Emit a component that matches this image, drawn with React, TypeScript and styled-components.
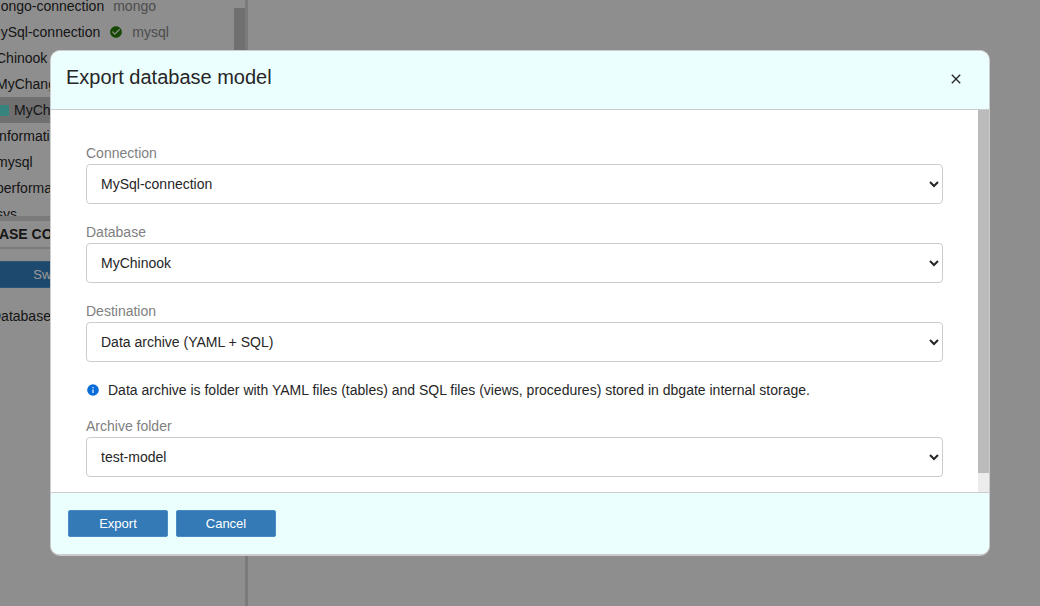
import React, { useId, useState } from "react";
import styled, { createGlobalStyle } from "styled-components";

const GlobalStyle = createGlobalStyle`
  * { box-sizing: border-box; }
  body {
    margin: 0;
    background: #ededed;
    color: #262626;
    font: 14px/16px "Liberation Sans", Arial, sans-serif;
  }
`;

const Shell = styled.div`
  display: flex;
  height: 100vh;
  overflow: hidden;
`;

const Sidebar = styled.aside`
  display: flex;
  flex-direction: column;
  width: 248px;
  flex: none;
  overflow: hidden;
  border-right: 3px solid #ccc;
`;

const TreePane = styled.div`
  display: flex;
  align-items: flex-end;
  height: 216px;
  overflow: hidden;
`;

const Tree = styled.ul`
  flex: 1;
  min-width: 0;
  height: 223px;
  margin: 0;
  padding: 0;
  list-style: none;
`;

const TreeRow = styled.li<{ $indent: number; $active?: boolean }>`
  display: flex;
  align-items: center;
  gap: 9px;
  height: 26px;
  white-space: nowrap;
  background: ${(p) => (p.$active ? "#bbb" : "transparent")};

  & > :first-child {
    margin-left: ${(p) => p.$indent}px;
  }
`;

const Engine = styled.span`
  color: #808080;
`;

const Square = styled.span`
  width: 11px;
  height: 11px;
  margin-right: -4px;
  background: #5cdbd3;
`;

const TreeThumb = styled.div`
  width: 11px;
  height: 208px;
  background: #bbb;
`;

const SplitBar = styled.div`
  height: 5px;
  flex: none;
  background: #ccc;
`;

const SectionTitle = styled.h2`
  margin: 0;
  padding: 5px 0 5px;
  border-bottom: 2px solid #ccc;
  text-indent: -48px;
  white-space: nowrap;
  font-size: 14px;
  line-height: 16px;
`;

const Button = styled.button<{ $wide?: boolean }>`
  width: ${(p) => (p.$wide ? "auto" : "100px")};
  height: 27px;
  padding: 0;
  border: 1px solid #4a8cc2;
  border-radius: 2px;
  background: #337ab7;
  color: #fff;
  font: 13px "Liberation Sans", Arial, sans-serif;
  margin: ${(p) => (p.$wide ? "12px 126px 20px -14px" : "0")};
`;

const SideNote = styled.p`
  margin: 0;
  text-indent: -9px;
`;

const Overlay = styled.div`
  position: fixed;
  inset: 0;
  padding: 50px;
  background: rgba(0, 0, 0, 0.4);
`;

const Dialog = styled.section`
  display: flex;
  flex-direction: column;
  max-height: 100%;
  overflow: hidden;
  border: 1px solid #ccc;
  border-bottom-width: 2px;
  border-radius: 10px;
  background: #fff;
`;

const Header = styled.header`
  display: flex;
  justify-content: space-between;
  flex: none;
  padding: 15px 25px 21px 15px;
  border-bottom: 1px solid #ccc;
  background: #ebffff;
`;

const Title = styled.h1`
  margin: 0;
  font-size: 20px;
  font-weight: 400;
  line-height: 22px;
`;

const CloseButton = styled.button`
  display: flex;
  height: 16px;
  margin-top: 5px;
  padding: 0;
  border: 0;
  background: none;
  color: inherit;
`;

const Body = styled.div`
  display: flex;
  height: 382px;
  min-height: 0;
`;

const Form = styled.form`
  flex: 1;
  min-width: 0;
  overflow: hidden;
  padding: 35px;
`;

const Scrollbar = styled.div`
  width: 11px;
  flex: none;
  background: #ececec;
`;

const ScrollThumb = styled.div`
  height: 95%;
  background: #bbb;
`;

const FieldBox = styled.div`
  display: flex;
  flex-direction: column;
  gap: 3px;
  margin-bottom: 20px;
`;

const Label = styled.label`
  color: #808080;
`;

const Select = styled.select`
  width: 100%;
  height: 40px;
  padding: 0 0 0 10px;
  border: 1px solid #ccc;
  border-radius: 4px;
  background-color: #fff;
  color: #262626;
  font: inherit;
`;

const Info = styled.p`
  display: flex;
  align-items: center;
  gap: 8px;
  margin: 0 0 20px;
`;

const Footer = styled.footer`
  display: flex;
  gap: 8px;
  flex: none;
  padding: 17px;
  border-top: 1px solid #ccc;
  background: #ebffff;
`;

const icons = {
  check:
    "M12 2C6.5 2 2 6.5 2 12S6.5 22 12 22 22 17.5 22 12 17.5 2 12 2M10 17L5 12L6.41 10.59L10 14.17L17.59 6.58L19 8L10 17Z",
  info: "M13 9H11V7H13M13 17H11V11H13M12 2A10 10 0 0 0 2 12A10 10 0 0 0 12 22A10 10 0 0 0 22 12A10 10 0 0 0 12 2Z",
  close:
    "M19 6.41L17.59 5L12 10.59L6.41 5L5 6.41L10.59 12L5 17.59L6.41 19L12 13.41L17.59 19L19 17.59L13.41 12L19 6.41Z",
};

function Icon({ name, size = 14, color = "currentColor" }: { name: keyof typeof icons; size?: number; color?: string }) {
  return (
    <svg width={size} height={size} viewBox="0 0 24 24" fill={color} aria-hidden="true">
      <path d={icons[name]} />
    </svg>
  );
}

function Field({ label, options }: { label: string; options: string[] }) {
  const id = useId();
  const [value, setValue] = useState(options[0]);
  return (
    <FieldBox>
      <Label htmlFor={id}>{label}</Label>
      <Select id={id} value={value} onChange={(e) => setValue(e.target.value)}>
        {options.map((o) => (
          <option key={o}>{o}</option>
        ))}
      </Select>
    </FieldBox>
  );
}

export default function App() {
  return (
    <>
      <GlobalStyle />
      <Shell>
        <Sidebar>
          <TreePane>
            <Tree>
              <TreeRow $indent={-11}>
                <span>Mongo-connection</span>
                <Engine>mongo</Engine>
              </TreeRow>
              <TreeRow $indent={-11}>
                <span>MySql-connection</span>
                <Icon name="check" color="#237804" />
                <Engine>mysql</Engine>
              </TreeRow>
              <TreeRow $indent={-4}><span>Chinook</span></TreeRow>
              <TreeRow $indent={-4}><span>MyChanged</span></TreeRow>
              <TreeRow $indent={-2} $active>
                <Square />
                <span>MyChinook</span>
              </TreeRow>
              <TreeRow $indent={-4}><span>information_schema</span></TreeRow>
              <TreeRow $indent={-4}><span>mysql</span></TreeRow>
              <TreeRow $indent={-4}><span>performance_schema</span></TreeRow>
              <TreeRow $indent={-4}><span>sys</span></TreeRow>
            </Tree>
            <TreeThumb />
          </TreePane>
          <SplitBar />
          <SectionTitle>DATABASE CONTENT</SectionTitle>
          <Button $wide>Switch</Button>
          <SideNote>Database</SideNote>
        </Sidebar>
      </Shell>

      <Overlay>
        <Dialog role="dialog" aria-modal="true" aria-labelledby="dialog-title">
          <Header>
            <Title id="dialog-title">Export database model</Title>
            <CloseButton type="button" aria-label="Close">
              <Icon name="close" size={16} />
            </CloseButton>
          </Header>
          <Body>
            <Form id="export-form" onSubmit={(e) => e.preventDefault()}>
              <Field label="Connection" options={["MySql-connection", "Mongo-connection"]} />
              <Field label="Database" options={["MyChinook", "Chinook"]} />
              <Field label="Destination" options={["Data archive (YAML + SQL)"]} />
              <Info>
                <Icon name="info" color="#096dd9" />
                Data archive is folder with YAML files (tables) and SQL files (views, procedures) stored in dbgate
                internal storage.
              </Info>
              <Field label="Archive folder" options={["test-model"]} />
            </Form>
            <Scrollbar>
              <ScrollThumb />
            </Scrollbar>
          </Body>
          <Footer>
            <Button type="submit" form="export-form">Export</Button>
            <Button type="button">Cancel</Button>
          </Footer>
        </Dialog>
      </Overlay>
    </>
  );
}
